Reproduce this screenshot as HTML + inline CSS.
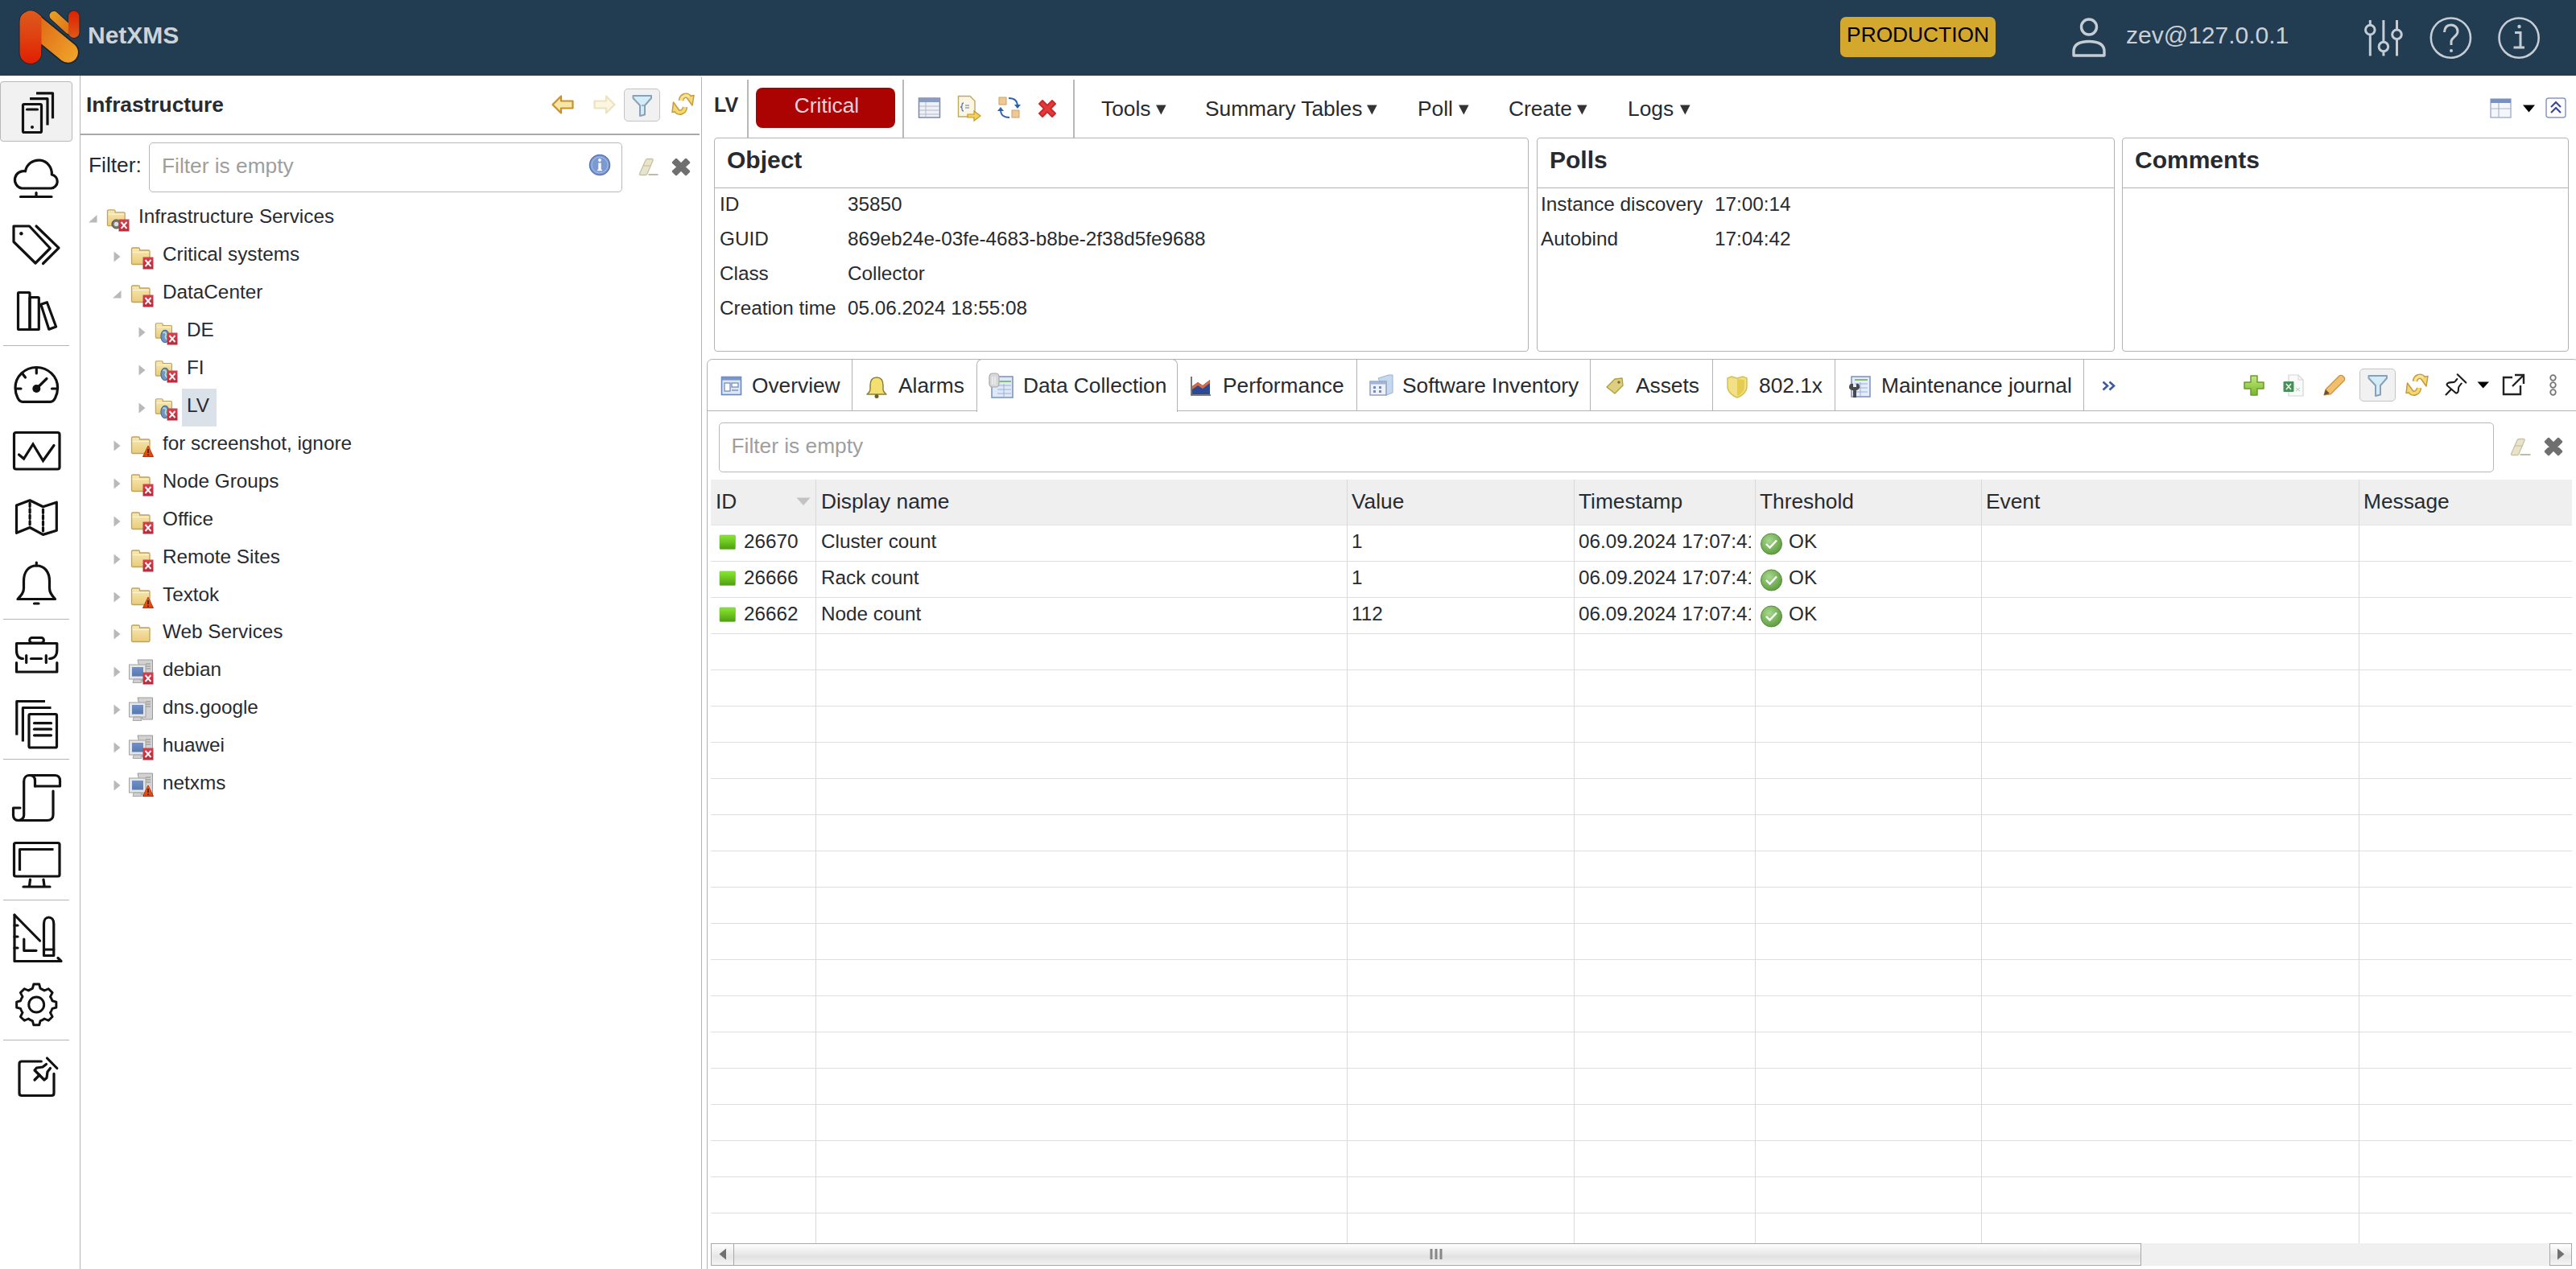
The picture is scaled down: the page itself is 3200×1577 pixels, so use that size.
<!DOCTYPE html>
<html><head><meta charset="utf-8"><title>NetXMS</title>
<style>
html,body{margin:0;padding:0;width:3200px;height:1577px;overflow:hidden;background:#fff;position:relative;font-family:"Liberation Sans",sans-serif}
.t{position:absolute;white-space:nowrap;line-height:1;font-family:"Liberation Sans",sans-serif}
svg{overflow:visible}
</style></head><body>
<svg width="0" height="0" style="position:absolute">
<defs>
<linearGradient id="fold" x1="0" y1="0" x2="0" y2="1"><stop offset="0" stop-color="#f7e9b4"/><stop offset="1" stop-color="#e9cc7a"/></linearGradient>
<linearGradient id="gbx" x1="0" y1="0" x2="0" y2="1"><stop offset="0" stop-color="#d4404f"/><stop offset="1" stop-color="#b82a3a"/></linearGradient>
<linearGradient id="gbw" x1="0" y1="0" x2="0" y2="1"><stop offset="0" stop-color="#e07020"/><stop offset="1" stop-color="#e04010"/></linearGradient>
<linearGradient id="scr" x1="0" y1="0" x2="0" y2="1"><stop offset="0" stop-color="#7090c8"/><stop offset="1" stop-color="#5878b0"/></linearGradient>
<linearGradient id="grn" x1="0" y1="0" x2="0" y2="1"><stop offset="0" stop-color="#8ae830"/><stop offset="1" stop-color="#4ea010"/></linearGradient>
<radialGradient id="okg" cx="0.4" cy="0.35" r="0.7"><stop offset="0" stop-color="#a8d890"/><stop offset="1" stop-color="#5a9a3a"/></radialGradient>
</defs></svg>
<div style="position:absolute;left:0px;top:0px;width:3200px;height:94px;background:#223c52"></div>
<svg style="position:absolute;left:0px;top:0px;" width="110" height="94" viewBox="0 0 110 94">
<defs>
<linearGradient id="lg1" x1="0" y1="0" x2="0" y2="1"><stop offset="0" stop-color="#dc5a1c"/><stop offset="0.5" stop-color="#e04010"/><stop offset="1" stop-color="#e01e00"/></linearGradient>
<linearGradient id="lg2" gradientUnits="userSpaceOnUse" x1="45" y1="40" x2="90" y2="72"><stop offset="0" stop-color="#e07018"/><stop offset="1" stop-color="#eea028"/></linearGradient>
<linearGradient id="lg3" x1="0" y1="0" x2="0" y2="1"><stop offset="0" stop-color="#dc2000"/><stop offset="1" stop-color="#e05818"/></linearGradient>
<linearGradient id="lg4" gradientUnits="userSpaceOnUse" x1="62" y1="16" x2="88" y2="40"><stop offset="0" stop-color="#e8a024"/><stop offset="1" stop-color="#e07018"/></linearGradient>
</defs>
<path d="M24.5 27 L24.5 65.5 A13.5 13.5 0 0 0 51.5 65.5 L51.5 55.6 L75.9 75.7 A13.5 13.5 0 0 0 93.1 54.9 L46.6 16.6 A13.5 13.5 0 0 0 24.5 27 Z" fill="url(#lg2)" stroke="#17222e" stroke-width="1.6"/>
<clipPath id="lcp"><rect x="0" y="0" width="51.5" height="94"/></clipPath>
<path clip-path="url(#lcp)" d="M24.5 27 L24.5 65.5 A13.5 13.5 0 0 0 51.5 65.5 L51.5 55.6 L75.9 75.7 A13.5 13.5 0 0 0 93.1 54.9 L46.6 16.6 A13.5 13.5 0 0 0 24.5 27 Z" fill="url(#lg1)"/>
<g stroke="#17222e" stroke-width="1.6">
<line x1="67" y1="19.5" x2="86" y2="37" stroke-width="12.6" stroke-linecap="round"/>
<rect x="85" y="13.5" width="13.5" height="33.5" rx="6.7"/>
</g>
<line x1="67" y1="19.5" x2="86" y2="37" stroke="url(#lg4)" stroke-width="11" stroke-linecap="round"/>
<rect x="85" y="13.5" width="13.5" height="33.5" rx="6.7" fill="url(#lg3)"/>
</svg>
<div class="t" style="left:109px;top:29px;font-size:30px;font-weight:700;color:#cdd3da;">NetXMS</div>
<div style="position:absolute;left:2286px;top:21px;width:193px;height:50px;background:#d4a82c;border-radius:7px"></div>
<div class="t" style="left:2294px;top:30px;font-size:26.3px;font-weight:400;color:#000;width:177px;text-align:center">PRODUCTION</div>
<svg style="position:absolute;left:2570px;top:20px;" width="50" height="54" viewBox="0 0 50 54"><g fill="none" stroke="#c5ccd4" stroke-width="3.4"><circle cx="25" cy="13.5" r="9.5"/><path d="M6 49 L6 44 C6 34 15 31.5 25 31.5 C35 31.5 44 34 44 44 L44 49 Z" stroke-linejoin="round"/></g></svg>
<div class="t" style="left:2641px;top:29px;font-size:30px;font-weight:400;color:#c9d0d8;">zev@127.0.0.1</div>
<svg style="position:absolute;left:2930px;top:20px;" width="60" height="54" viewBox="0 0 60 54"><g fill="none" stroke="#c5ccd4" stroke-width="3"><line x1="14.3" y1="5" x2="14.3" y2="11"/><line x1="14.3" y1="23" x2="14.3" y2="49.5"/><circle cx="14.3" cy="17.1" r="5.8"/><line x1="30.9" y1="5" x2="30.9" y2="32"/><line x1="30.9" y1="44" x2="30.9" y2="49.5"/><circle cx="30.9" cy="38" r="5.8"/><line x1="47.5" y1="5" x2="47.5" y2="17"/><line x1="47.5" y1="29" x2="47.5" y2="49.5"/><circle cx="47.5" cy="22.8" r="5.8"/></g></svg>
<svg style="position:absolute;left:3015px;top:18px;" width="60" height="60" viewBox="0 0 60 60"><g fill="none" stroke="#c5ccd4" stroke-width="2.6"><circle cx="29.4" cy="29.1" r="24.6"/><path d="M21.5 22 C22 15 26 13 29.5 13 C34 13 38 16 38 21 C38 27 31 28 30 33 L30 38" stroke-width="3"/></g><circle cx="30" cy="45" r="2" fill="#c5ccd4"/></svg>
<svg style="position:absolute;left:3100px;top:18px;" width="60" height="60" viewBox="0 0 60 60"><g fill="none" stroke="#c5ccd4" stroke-width="2.6"><circle cx="29.1" cy="29.1" r="24.6"/></g><circle cx="29.5" cy="15" r="2.2" fill="#c5ccd4"/><path d="M24 22.5 L31 22.5 L31 40 M22.5 41 L36 41" fill="none" stroke="#c5ccd4" stroke-width="3"/></svg>
<div style="position:absolute;left:0px;top:101px;width:90px;height:75px;background:#f1f1f1;border:1px solid #b8b8b8;border-radius:4px;box-sizing:border-box"></div>
<div style="position:absolute;left:4px;top:429px;width:82px;height:1px;background:#b5b5b5"></div>
<div style="position:absolute;left:4px;top:769px;width:82px;height:1px;background:#b5b5b5"></div>
<div style="position:absolute;left:4px;top:943px;width:82px;height:1px;background:#b5b5b5"></div>
<div style="position:absolute;left:4px;top:1118px;width:82px;height:1px;background:#b5b5b5"></div>
<div style="position:absolute;left:4px;top:1292px;width:82px;height:1px;background:#b5b5b5"></div>
<svg style="position:absolute;left:0px;top:94px;" width="99" height="1483" viewBox="0 94 99 1483">
<g fill="none" stroke="#111" stroke-width="3.2" stroke-linejoin="round" stroke-linecap="round">
<rect x="28.5" y="129.5" width="23" height="35" rx="1.5"/>
<line x1="33.5" y1="136" x2="46.5" y2="136"/>
<path d="M37 122.7 L59 122.7 L59 155.5" stroke-linecap="butt"/>
<path d="M45 115.8 L65.5 115.8 L65.5 147.3" stroke-linecap="butt"/>
</g>
<circle cx="40" cy="158" r="2" fill="#111"/>
<g fill="none" stroke="#111" stroke-width="3.2" stroke-linejoin="round" stroke-linecap="round">
<path d="M27 234 A10.8 10.8 0 0 1 31.5 212.8 A16.55 16.55 0 0 1 64.3 217 A8.6 8.6 0 0 1 63.5 234 Z"/>
<line x1="25.5" y1="244.5" x2="64" y2="244.5"/>
<line x1="45" y1="239.5" x2="45" y2="244.5"/>
</g>
<g fill="none" stroke="#111" stroke-width="3.2" stroke-linejoin="round" stroke-linecap="round">
<path d="M17 281 L36.5 281 L62.3 308.5 L44 327 L17 300.5 Z"/>
<path d="M45 281 L73 308.2 L53.5 327.5"/>
</g>
<circle cx="26.4" cy="290.3" r="2.2" fill="#111"/>
<g fill="none" stroke="#111" stroke-width="3.2" stroke-linejoin="round" stroke-linecap="round">
<rect x="22.5" y="363.5" width="14.5" height="46" rx="1"/>
<rect x="37" y="369.5" width="11.3" height="40" rx="1"/>
<path d="M50.8 378.3 L58.4 375.7 L69.6 406 L60.8 409.2 Z"/>
</g>
<g fill="none" stroke="#111" stroke-width="3.2" stroke-linejoin="round" stroke-linecap="round">
<path d="M28 499.3 C25 499.3 23.5 497.5 22 494.5 C20 490.5 19 486 19 482 A26.3 25.5 0 0 1 71.6 482 C71.6 486 70.6 490.5 68.6 494.5 C67.1 497.5 65.6 499.3 62.6 499.3 Z"/>
<line x1="45.3" y1="457" x2="45.3" y2="464"/>
<line x1="20" y1="483" x2="26" y2="483"/>
<line x1="64.5" y1="483" x2="70.5" y2="483"/>
<line x1="28" y1="464.5" x2="31.5" y2="469"/>
<line x1="45.3" y1="483" x2="58" y2="470.5"/>
</g>
<circle cx="45.3" cy="483" r="5" fill="#111"/>
<g fill="none" stroke="#111" stroke-width="3.2" stroke-linejoin="round" stroke-linecap="round">
<rect x="17.5" y="537.5" width="56.5" height="45.5" rx="2.5"/>
<path d="M23.5 565 L29.6 570 L41 552 L53.5 572.5 L67 553.5" stroke-linejoin="miter"/>
</g>
<g fill="none" stroke="#111" stroke-width="3.2" stroke-linejoin="round" stroke-linecap="round">
<path d="M20.5 628 L37.1 621.8 L53.5 629.7 L70.3 624.2 L70.3 659.3 L53.5 664.4 L37.1 655.5 L20.5 662.3 Z"/>
<line x1="37.1" y1="625" x2="37.1" y2="653" stroke-dasharray="4.5 3"/>
<line x1="53.5" y1="633" x2="53.5" y2="661" stroke-dasharray="4.5 3"/>
</g>
<g fill="none" stroke="#111" stroke-width="3.2" stroke-linejoin="round" stroke-linecap="round">
<path d="M45.3 703 C35 703 29.5 711 29.5 722 L29.5 731 C29.5 736 27 739 22 744.5 L68.5 744.5 C63.5 739 61.5 736 61.5 731 L61.5 722 C61.5 711 55.5 703 45.3 703 Z"/>
<line x1="45.3" y1="699" x2="45.3" y2="703"/>
<line x1="42.5" y1="750" x2="48" y2="750"/>
</g>
<g fill="none" stroke="#111" stroke-width="3.2" stroke-linejoin="round" stroke-linecap="round">
<path d="M20.5 808 L20.5 799.5 L70.8 799.5 L70.8 808 C70.8 815 67 818.5 61.5 818.5"/>
<path d="M28.5 818.5 C23 818.5 20.5 815 20.5 808"/>
<line x1="38.5" y1="818.5" x2="51.5" y2="818.5"/>
<line x1="32.7" y1="814.5" x2="32.7" y2="823.5"/>
<line x1="57.3" y1="814.5" x2="57.3" y2="823.5"/>
<path d="M20.5 823.5 L20.5 835 L70.8 835 L70.8 823.5"/>
<rect x="36.8" y="792.5" width="17.5" height="6.5" rx="3"/>
</g>
<g fill="none" stroke="#111" stroke-width="3.2" stroke-linejoin="round" stroke-linecap="round">
<path d="M20.8 913.5 L20.8 871.5 L56 871.5" stroke-linecap="butt"/>
<path d="M28.4 921.5 L28.4 879.5 L63.5 879.5" stroke-linecap="butt"/>
<rect x="36" y="887.5" width="34.5" height="41.5" rx="1.5"/>
<line x1="42.5" y1="898.7" x2="63.5" y2="898.7"/>
<line x1="42.5" y1="906.2" x2="63.5" y2="906.2"/>
<line x1="42.5" y1="913.8" x2="63.5" y2="913.8"/>
</g>
<g fill="none" stroke="#111" stroke-width="3.2" stroke-linejoin="round" stroke-linecap="round">
<path d="M43.5 977 L43.5 970 C43.5 965 40 963.5 36.5 963.5 C33 963.5 29.7 966 29.7 971 L29.7 1013 C29.7 1017 26 1019.5 23 1019.5 C19 1019.5 16.5 1017 16.5 1013 L16.5 1004 L25 1004"/>
<path d="M36.5 963.5 L68 963.5 C72 963.5 74.5 966 74.5 970 L74.5 977 L43.5 977"/>
<path d="M66 983 L66 1012.5 C66 1017 63 1019.5 59 1019.5 L23 1019.5"/>
</g>
<g fill="none" stroke="#111" stroke-width="3.2" stroke-linejoin="round" stroke-linecap="round">
<rect x="17.5" y="1047.5" width="56.5" height="41.5" rx="2"/>
<path d="M24.5 1082 L24.5 1055.5 L66.5 1055.5" stroke-linecap="butt"/>
<line x1="37.5" y1="1093" x2="36.5" y2="1101"/>
<line x1="54" y1="1093" x2="55" y2="1101"/>
<line x1="29" y1="1102" x2="62" y2="1102"/>
</g>
<g fill="none" stroke="#111" stroke-width="3.2" stroke-linejoin="round" stroke-linecap="round">
<path d="M18 1137 L18 1194.5 L76 1194.5 L72 1190.5"/>
<line x1="18" y1="1137" x2="49.5" y2="1169"/>
<path d="M29.8 1167 L29.8 1181.3 L45 1181.3"/>
<line x1="18" y1="1150" x2="22" y2="1150"/>
<line x1="18" y1="1164" x2="22" y2="1164"/>
<line x1="18" y1="1178" x2="22" y2="1178"/>
<path d="M54.5 1187.5 L54.5 1148 C54.5 1143 57 1140 60.5 1140 C64 1140 66.8 1143 66.8 1148 L66.8 1187.5 Z"/>
<line x1="54.5" y1="1180" x2="66.8" y2="1180"/>
</g>
<g fill="none" stroke="#111" stroke-width="3.2" stroke-linejoin="round" stroke-linecap="round" transform="translate(45.2 1248.5) scale(0.92) translate(-45.2 -1251.5)">
<path d="M41.5 1223.8 L49 1223.8 L50.5 1229.5 C52.5 1230.3 54.3 1231.3 56 1232.5 L61.5 1230 L66.8 1235.3 L64 1240.8 C65.2 1242.5 66 1244.3 66.7 1246.3 L72 1247.8 L72 1255.3 L66.7 1256.8 C66 1258.8 65.2 1260.6 64 1262.3 L66.8 1267.8 L61.5 1273 L56 1270.5 C54.3 1271.7 52.5 1272.7 50.5 1273.5 L49 1279 L41.5 1279 L40 1273.5 C38 1272.7 36.2 1271.7 34.5 1270.5 L29 1273 L23.7 1267.8 L26.5 1262.3 C25.3 1260.6 24.5 1258.8 23.8 1256.8 L18.5 1255.3 L18.5 1247.8 L23.8 1246.3 C24.5 1244.3 25.3 1242.5 26.5 1240.8 L23.7 1235.3 L29 1230 L34.5 1232.5 C36.2 1231.3 38 1230.3 40 1229.5 Z"/>
<circle cx="45.2" cy="1251.5" r="10.3"/>
</g>
<g fill="none" stroke="#111" stroke-width="3.2" stroke-linejoin="round" stroke-linecap="round">
<path d="M51.3 1319 L27 1319 C25 1319 24 1320 24 1322 L24 1358.5 C24 1360.5 25 1361.5 27 1361.5 L64 1361.5 C66 1361.5 67 1360.5 67 1358.5 L67 1334.4"/>
<line x1="58.5" y1="1315" x2="70.8" y2="1327.5"/>
<path d="M57.5 1322.5 L53 1326 L45.5 1327 L43 1330 L55 1342 L58 1339.5 L59 1332 L62.5 1327.5"/>
<line x1="49" y1="1336" x2="43" y2="1342"/>
</g>
</svg>
<div style="position:absolute;left:99px;top:94px;width:773px;height:1490px;border:1px solid #b3b3b3;border-top:none;border-top-right-radius:4px;box-sizing:border-box"></div>
<div class="t" style="left:107px;top:117px;font-size:26.3px;font-weight:700;color:#272b31;">Infrastructure</div>
<svg style="position:absolute;left:684px;top:116px;" width="32" height="28" viewBox="0 0 32 28"><path d="M2.5 14 L13 3.5 L13 9.5 L27.5 9.5 L27.5 18.5 L13 18.5 L13 24.5 Z" fill="#f6e6a8" stroke="#c8902a" stroke-width="2.2" stroke-linejoin="round"/></svg>
<svg style="position:absolute;left:734px;top:116px;" width="32" height="28" viewBox="0 0 32 28"><path d="M29.5 14 L19 3.5 L19 9.5 L4.5 9.5 L4.5 18.5 L19 18.5 L19 24.5 Z" fill="#fbf6e2" stroke="#ece2c0" stroke-width="2.2" stroke-linejoin="round"/></svg>
<div style="position:absolute;left:775px;top:110px;width:45px;height:41px;background:#f1f1f1;border:1px solid #c4c4c4;border-radius:5px;box-sizing:border-box"></div>
<svg style="position:absolute;left:784px;top:116px;" width="28" height="30" viewBox="0 0 28 30"><path d="M2.5 3 L25 3 L25 6 L17 15 L17 26.5 L11 28 L11 15 L2.5 6 Z" fill="#d4ecf8" stroke="#8aa0b8" stroke-width="2" stroke-linejoin="round"/><path d="M13 15 L17 15" stroke="#8aa0b8" stroke-width="1.5"/></svg>
<svg style="position:absolute;left:832px;top:114px;" width="32" height="32" viewBox="0 0 32 32"><g fill="none" stroke-linecap="butt"><path d="M14 11 C14.5 5 21 2.5 24.5 7" stroke="#c89a3a" stroke-width="6.4"/><path d="M19 19 C18.5 25 12 28 8 23.5" stroke="#c89a3a" stroke-width="6.4"/></g><path d="M20.5 6.5 L30 4.5 L28 17 Z" fill="#f0d878" stroke="#c89a3a" stroke-width="1.5" stroke-linejoin="round"/><path d="M12.5 24 L3 25.5 L4.5 13 Z" fill="#f0d878" stroke="#c89a3a" stroke-width="1.5" stroke-linejoin="round"/><g fill="none"><path d="M14 11 C14.5 5 21 2.5 24.5 7" stroke="#f6e496" stroke-width="3.6"/><path d="M19 19 C18.5 25 12 28 8 23.5" stroke="#f3d86e" stroke-width="3.6"/></g></svg>
<div style="position:absolute;left:100px;top:166px;width:769px;height:2px;background:#a9a9a9"></div>
<div class="t" style="left:110px;top:192px;font-size:26.3px;font-weight:400;color:#272b31;">Filter:</div>
<div style="position:absolute;left:185px;top:177px;width:588px;height:62px;border:1px solid #b8b8b8;border-radius:5px;box-sizing:border-box;background:#fff"></div>
<div class="t" style="left:201px;top:193px;font-size:26.3px;font-weight:400;color:#9e9e9e;">Filter is empty</div>
<svg style="position:absolute;left:731px;top:191px;" width="28" height="28" viewBox="0 0 28 28"><circle cx="14" cy="14" r="12.5" fill="#7d9ad0" stroke="#5a78b8" stroke-width="1.5"/><circle cx="14" cy="14" r="10" fill="none" stroke="#a8c0e8" stroke-width="1"/><rect x="12.3" y="11.5" width="3.4" height="9" fill="#fff"/><circle cx="14" cy="8" r="1.9" fill="#fff"/><path d="M11 20.5 L17 20.5" stroke="#fff" stroke-width="1.5"/></svg>
<svg style="position:absolute;left:792px;top:195px;" width="28" height="25" viewBox="0 0 28 25"><path d="M2.5 21 L10 4 C10.5 3 11.5 2.5 12.5 2.5 L17.5 2.5 C19 2.5 19.5 3.5 19 4.5 L12 21 C11.5 22 10.5 22.5 9.5 22.5 L4 22.5 C2.8 22.5 2 22 2.5 21 Z" fill="#e8e4cc" stroke="#c8c2a0" stroke-width="1.3"/><path d="M6.5 11 L17 11" stroke="#c8c2a0" stroke-width="1.2"/><path d="M13.5 22 L25.5 22" stroke="#a8a48c" stroke-width="1.5"/></svg>
<svg style="position:absolute;left:832px;top:194px;" width="28" height="27" viewBox="0 0 28 27"><path d="M4 8 L8 4 L14 10 L20 4 L24 8 L18 13.5 L24 19 L20 23 L14 17 L8 23 L4 19 L10 13.5 Z" fill="#6f6f6f" stroke="#6f6f6f" stroke-width="2.5" stroke-linejoin="round"/></svg>
<svg style="position:absolute;left:110.0px;top:267px;" width="11" height="10" viewBox="0 0 11 10"><path d="M10.5 0 L10.5 9.5 L0 9.5 Z" fill="#b9b9b9"/></svg>
<svg style="position:absolute;left:132px;top:259px" width="28" height="28"><svg x="0" y="0" width="27" height="27" viewBox="0 0 28 28">
<path d="M1.5 6.5 L1.5 3.5 C1.5 2.5 2 2 3 2 L10 2 C11 2 11.5 2.5 11.5 3.5 L11.5 5 L22.5 5 C23.5 5 24 5.5 24 6.5 L24 21 C24 22 23.5 22.5 22.5 22.5 L3 22.5 C2 22.5 1.5 22 1.5 21 Z" fill="url(#fold)" stroke="#c4a058" stroke-width="1.3"/>
<path d="M2.5 7.5 L23 7.5" stroke="#fbf3d0" stroke-width="1.2"/>
</svg><svg x="6" y="13" width="13" height="13" viewBox="0 0 14 14">
<circle cx="7" cy="7" r="6" fill="#777" stroke="#444" stroke-width="1"/><circle cx="7" cy="7" r="3" fill="#ddd"/>
</svg></svg>
<svg style="position:absolute;left:147px;top:272px" width="14" height="16" viewBox="0 0 14 16">
<rect x="0.5" y="0.5" width="13" height="15" fill="url(#gbx)"/>
<path d="M3.5 4 L10.5 12 M10.5 4 L3.5 12" stroke="#fff" stroke-width="2" opacity="0.95"/>
</svg>
<div class="t" style="left:172px;top:257px;font-size:24.3px;font-weight:400;color:#272b31;">Infrastructure Services</div>
<svg style="position:absolute;left:141.3px;top:312px;" width="9" height="14" viewBox="0 0 9 14"><path d="M0.5 0.5 L8.5 7 L0.5 13.5 Z" fill="#b9b9b9"/></svg>
<svg style="position:absolute;left:162px;top:306px" width="28" height="28" viewBox="0 0 28 28">
<path d="M1.5 6.5 L1.5 3.5 C1.5 2.5 2 2 3 2 L10 2 C11 2 11.5 2.5 11.5 3.5 L11.5 5 L22.5 5 C23.5 5 24 5.5 24 6.5 L24 21 C24 22 23.5 22.5 22.5 22.5 L3 22.5 C2 22.5 1.5 22 1.5 21 Z" fill="url(#fold)" stroke="#c4a058" stroke-width="1.3"/>
<path d="M2.5 7.5 L23 7.5" stroke="#fbf3d0" stroke-width="1.2"/>
</svg>
<svg style="position:absolute;left:177px;top:319px" width="14" height="16" viewBox="0 0 14 16">
<rect x="0.5" y="0.5" width="13" height="15" fill="url(#gbx)"/>
<path d="M3.5 4 L10.5 12 M10.5 4 L3.5 12" stroke="#fff" stroke-width="2" opacity="0.95"/>
</svg>
<div class="t" style="left:202px;top:304px;font-size:24.3px;font-weight:400;color:#272b31;">Critical systems</div>
<svg style="position:absolute;left:140.3px;top:361px;" width="11" height="10" viewBox="0 0 11 10"><path d="M10.5 0 L10.5 9.5 L0 9.5 Z" fill="#b9b9b9"/></svg>
<svg style="position:absolute;left:162px;top:353px" width="28" height="28" viewBox="0 0 28 28">
<path d="M1.5 6.5 L1.5 3.5 C1.5 2.5 2 2 3 2 L10 2 C11 2 11.5 2.5 11.5 3.5 L11.5 5 L22.5 5 C23.5 5 24 5.5 24 6.5 L24 21 C24 22 23.5 22.5 22.5 22.5 L3 22.5 C2 22.5 1.5 22 1.5 21 Z" fill="url(#fold)" stroke="#c4a058" stroke-width="1.3"/>
<path d="M2.5 7.5 L23 7.5" stroke="#fbf3d0" stroke-width="1.2"/>
</svg>
<svg style="position:absolute;left:177px;top:366px" width="14" height="16" viewBox="0 0 14 16">
<rect x="0.5" y="0.5" width="13" height="15" fill="url(#gbx)"/>
<path d="M3.5 4 L10.5 12 M10.5 4 L3.5 12" stroke="#fff" stroke-width="2" opacity="0.95"/>
</svg>
<div class="t" style="left:202px;top:351px;font-size:24.3px;font-weight:400;color:#272b31;">DataCenter</div>
<svg style="position:absolute;left:171.6px;top:406px;" width="9" height="14" viewBox="0 0 9 14"><path d="M0.5 0.5 L8.5 7 L0.5 13.5 Z" fill="#b9b9b9"/></svg>
<svg style="position:absolute;left:192px;top:400px" width="28" height="28"><svg x="0" y="0" width="25" height="25" viewBox="0 0 28 28">
<path d="M1.5 6.5 L1.5 3.5 C1.5 2.5 2 2 3 2 L10 2 C11 2 11.5 2.5 11.5 3.5 L11.5 5 L22.5 5 C23.5 5 24 5.5 24 6.5 L24 21 C24 22 23.5 22.5 22.5 22.5 L3 22.5 C2 22.5 1.5 22 1.5 21 Z" fill="url(#fold)" stroke="#c4a058" stroke-width="1.3"/>
<path d="M2.5 7.5 L23 7.5" stroke="#fbf3d0" stroke-width="1.2"/>
</svg><svg x="7" y="8" width="12" height="20" viewBox="0 0 14 20">
<ellipse cx="7" cy="10" rx="6" ry="9" fill="#6f95c0" stroke="#3d6690" stroke-width="1.2"/>
<path d="M4 5 C7 3 10 6 8 9 C6 12 9 13 10 15" stroke="#b8e0c8" stroke-width="2" fill="none"/>
</svg></svg>
<svg style="position:absolute;left:207px;top:413px" width="14" height="16" viewBox="0 0 14 16">
<rect x="0.5" y="0.5" width="13" height="15" fill="url(#gbx)"/>
<path d="M3.5 4 L10.5 12 M10.5 4 L3.5 12" stroke="#fff" stroke-width="2" opacity="0.95"/>
</svg>
<div class="t" style="left:232px;top:398px;font-size:24.3px;font-weight:400;color:#272b31;">DE</div>
<svg style="position:absolute;left:171.6px;top:453px;" width="9" height="14" viewBox="0 0 9 14"><path d="M0.5 0.5 L8.5 7 L0.5 13.5 Z" fill="#b9b9b9"/></svg>
<svg style="position:absolute;left:192px;top:447px" width="28" height="28"><svg x="0" y="0" width="25" height="25" viewBox="0 0 28 28">
<path d="M1.5 6.5 L1.5 3.5 C1.5 2.5 2 2 3 2 L10 2 C11 2 11.5 2.5 11.5 3.5 L11.5 5 L22.5 5 C23.5 5 24 5.5 24 6.5 L24 21 C24 22 23.5 22.5 22.5 22.5 L3 22.5 C2 22.5 1.5 22 1.5 21 Z" fill="url(#fold)" stroke="#c4a058" stroke-width="1.3"/>
<path d="M2.5 7.5 L23 7.5" stroke="#fbf3d0" stroke-width="1.2"/>
</svg><svg x="7" y="8" width="12" height="20" viewBox="0 0 14 20">
<ellipse cx="7" cy="10" rx="6" ry="9" fill="#6f95c0" stroke="#3d6690" stroke-width="1.2"/>
<path d="M4 5 C7 3 10 6 8 9 C6 12 9 13 10 15" stroke="#b8e0c8" stroke-width="2" fill="none"/>
</svg></svg>
<svg style="position:absolute;left:207px;top:460px" width="14" height="16" viewBox="0 0 14 16">
<rect x="0.5" y="0.5" width="13" height="15" fill="url(#gbx)"/>
<path d="M3.5 4 L10.5 12 M10.5 4 L3.5 12" stroke="#fff" stroke-width="2" opacity="0.95"/>
</svg>
<div class="t" style="left:232px;top:445px;font-size:24.3px;font-weight:400;color:#272b31;">FI</div>
<div style="position:absolute;left:226px;top:483px;width:43px;height:47px;background:#dae1e9"></div>
<svg style="position:absolute;left:171.6px;top:500px;" width="9" height="14" viewBox="0 0 9 14"><path d="M0.5 0.5 L8.5 7 L0.5 13.5 Z" fill="#b9b9b9"/></svg>
<svg style="position:absolute;left:192px;top:494px" width="28" height="28"><svg x="0" y="0" width="25" height="25" viewBox="0 0 28 28">
<path d="M1.5 6.5 L1.5 3.5 C1.5 2.5 2 2 3 2 L10 2 C11 2 11.5 2.5 11.5 3.5 L11.5 5 L22.5 5 C23.5 5 24 5.5 24 6.5 L24 21 C24 22 23.5 22.5 22.5 22.5 L3 22.5 C2 22.5 1.5 22 1.5 21 Z" fill="url(#fold)" stroke="#c4a058" stroke-width="1.3"/>
<path d="M2.5 7.5 L23 7.5" stroke="#fbf3d0" stroke-width="1.2"/>
</svg><svg x="7" y="8" width="12" height="20" viewBox="0 0 14 20">
<ellipse cx="7" cy="10" rx="6" ry="9" fill="#6f95c0" stroke="#3d6690" stroke-width="1.2"/>
<path d="M4 5 C7 3 10 6 8 9 C6 12 9 13 10 15" stroke="#b8e0c8" stroke-width="2" fill="none"/>
</svg></svg>
<svg style="position:absolute;left:207px;top:507px" width="14" height="16" viewBox="0 0 14 16">
<rect x="0.5" y="0.5" width="13" height="15" fill="url(#gbx)"/>
<path d="M3.5 4 L10.5 12 M10.5 4 L3.5 12" stroke="#fff" stroke-width="2" opacity="0.95"/>
</svg>
<div class="t" style="left:232px;top:492px;font-size:24.3px;font-weight:400;color:#272b31;">LV</div>
<svg style="position:absolute;left:141.3px;top:547px;" width="9" height="14" viewBox="0 0 9 14"><path d="M0.5 0.5 L8.5 7 L0.5 13.5 Z" fill="#b9b9b9"/></svg>
<svg style="position:absolute;left:162px;top:541px" width="28" height="28" viewBox="0 0 28 28">
<path d="M1.5 6.5 L1.5 3.5 C1.5 2.5 2 2 3 2 L10 2 C11 2 11.5 2.5 11.5 3.5 L11.5 5 L22.5 5 C23.5 5 24 5.5 24 6.5 L24 21 C24 22 23.5 22.5 22.5 22.5 L3 22.5 C2 22.5 1.5 22 1.5 21 Z" fill="url(#fold)" stroke="#c4a058" stroke-width="1.3"/>
<path d="M2.5 7.5 L23 7.5" stroke="#fbf3d0" stroke-width="1.2"/>
</svg>
<svg style="position:absolute;left:176.5px;top:553px" width="14" height="16" viewBox="0 0 14 16">
<path d="M7 1 L13.5 14.5 L0.5 14.5 Z" fill="url(#gbw)" stroke="#c03008" stroke-width="1" stroke-linejoin="round"/>
<path d="M7 5 L7 10" stroke="#5a1a00" stroke-width="1.8"/><circle cx="7" cy="12.3" r="1" fill="#5a1a00"/>
</svg>
<div class="t" style="left:202px;top:539px;font-size:24.3px;font-weight:400;color:#272b31;">for screenshot, ignore</div>
<svg style="position:absolute;left:141.3px;top:594px;" width="9" height="14" viewBox="0 0 9 14"><path d="M0.5 0.5 L8.5 7 L0.5 13.5 Z" fill="#b9b9b9"/></svg>
<svg style="position:absolute;left:162px;top:588px" width="28" height="28" viewBox="0 0 28 28">
<path d="M1.5 6.5 L1.5 3.5 C1.5 2.5 2 2 3 2 L10 2 C11 2 11.5 2.5 11.5 3.5 L11.5 5 L22.5 5 C23.5 5 24 5.5 24 6.5 L24 21 C24 22 23.5 22.5 22.5 22.5 L3 22.5 C2 22.5 1.5 22 1.5 21 Z" fill="url(#fold)" stroke="#c4a058" stroke-width="1.3"/>
<path d="M2.5 7.5 L23 7.5" stroke="#fbf3d0" stroke-width="1.2"/>
</svg>
<svg style="position:absolute;left:177px;top:601px" width="14" height="16" viewBox="0 0 14 16">
<rect x="0.5" y="0.5" width="13" height="15" fill="url(#gbx)"/>
<path d="M3.5 4 L10.5 12 M10.5 4 L3.5 12" stroke="#fff" stroke-width="2" opacity="0.95"/>
</svg>
<div class="t" style="left:202px;top:586px;font-size:24.3px;font-weight:400;color:#272b31;">Node Groups</div>
<svg style="position:absolute;left:141.3px;top:641px;" width="9" height="14" viewBox="0 0 9 14"><path d="M0.5 0.5 L8.5 7 L0.5 13.5 Z" fill="#b9b9b9"/></svg>
<svg style="position:absolute;left:162px;top:635px" width="28" height="28" viewBox="0 0 28 28">
<path d="M1.5 6.5 L1.5 3.5 C1.5 2.5 2 2 3 2 L10 2 C11 2 11.5 2.5 11.5 3.5 L11.5 5 L22.5 5 C23.5 5 24 5.5 24 6.5 L24 21 C24 22 23.5 22.5 22.5 22.5 L3 22.5 C2 22.5 1.5 22 1.5 21 Z" fill="url(#fold)" stroke="#c4a058" stroke-width="1.3"/>
<path d="M2.5 7.5 L23 7.5" stroke="#fbf3d0" stroke-width="1.2"/>
</svg>
<svg style="position:absolute;left:177px;top:648px" width="14" height="16" viewBox="0 0 14 16">
<rect x="0.5" y="0.5" width="13" height="15" fill="url(#gbx)"/>
<path d="M3.5 4 L10.5 12 M10.5 4 L3.5 12" stroke="#fff" stroke-width="2" opacity="0.95"/>
</svg>
<div class="t" style="left:202px;top:633px;font-size:24.3px;font-weight:400;color:#272b31;">Office</div>
<svg style="position:absolute;left:141.3px;top:688px;" width="9" height="14" viewBox="0 0 9 14"><path d="M0.5 0.5 L8.5 7 L0.5 13.5 Z" fill="#b9b9b9"/></svg>
<svg style="position:absolute;left:162px;top:682px" width="28" height="28" viewBox="0 0 28 28">
<path d="M1.5 6.5 L1.5 3.5 C1.5 2.5 2 2 3 2 L10 2 C11 2 11.5 2.5 11.5 3.5 L11.5 5 L22.5 5 C23.5 5 24 5.5 24 6.5 L24 21 C24 22 23.5 22.5 22.5 22.5 L3 22.5 C2 22.5 1.5 22 1.5 21 Z" fill="url(#fold)" stroke="#c4a058" stroke-width="1.3"/>
<path d="M2.5 7.5 L23 7.5" stroke="#fbf3d0" stroke-width="1.2"/>
</svg>
<svg style="position:absolute;left:177px;top:695px" width="14" height="16" viewBox="0 0 14 16">
<rect x="0.5" y="0.5" width="13" height="15" fill="url(#gbx)"/>
<path d="M3.5 4 L10.5 12 M10.5 4 L3.5 12" stroke="#fff" stroke-width="2" opacity="0.95"/>
</svg>
<div class="t" style="left:202px;top:680px;font-size:24.3px;font-weight:400;color:#272b31;">Remote Sites</div>
<svg style="position:absolute;left:141.3px;top:735px;" width="9" height="14" viewBox="0 0 9 14"><path d="M0.5 0.5 L8.5 7 L0.5 13.5 Z" fill="#b9b9b9"/></svg>
<svg style="position:absolute;left:162px;top:729px" width="28" height="28" viewBox="0 0 28 28">
<path d="M1.5 6.5 L1.5 3.5 C1.5 2.5 2 2 3 2 L10 2 C11 2 11.5 2.5 11.5 3.5 L11.5 5 L22.5 5 C23.5 5 24 5.5 24 6.5 L24 21 C24 22 23.5 22.5 22.5 22.5 L3 22.5 C2 22.5 1.5 22 1.5 21 Z" fill="url(#fold)" stroke="#c4a058" stroke-width="1.3"/>
<path d="M2.5 7.5 L23 7.5" stroke="#fbf3d0" stroke-width="1.2"/>
</svg>
<svg style="position:absolute;left:176.5px;top:741px" width="14" height="16" viewBox="0 0 14 16">
<path d="M7 1 L13.5 14.5 L0.5 14.5 Z" fill="url(#gbw)" stroke="#c03008" stroke-width="1" stroke-linejoin="round"/>
<path d="M7 5 L7 10" stroke="#5a1a00" stroke-width="1.8"/><circle cx="7" cy="12.3" r="1" fill="#5a1a00"/>
</svg>
<div class="t" style="left:202px;top:727px;font-size:24.3px;font-weight:400;color:#272b31;">Textok</div>
<svg style="position:absolute;left:141.3px;top:781px;" width="9" height="14" viewBox="0 0 9 14"><path d="M0.5 0.5 L8.5 7 L0.5 13.5 Z" fill="#b9b9b9"/></svg>
<svg style="position:absolute;left:162px;top:775px" width="28" height="28" viewBox="0 0 28 28">
<path d="M1.5 6.5 L1.5 3.5 C1.5 2.5 2 2 3 2 L10 2 C11 2 11.5 2.5 11.5 3.5 L11.5 5 L22.5 5 C23.5 5 24 5.5 24 6.5 L24 21 C24 22 23.5 22.5 22.5 22.5 L3 22.5 C2 22.5 1.5 22 1.5 21 Z" fill="url(#fold)" stroke="#c4a058" stroke-width="1.3"/>
<path d="M2.5 7.5 L23 7.5" stroke="#fbf3d0" stroke-width="1.2"/>
</svg>
<div class="t" style="left:202px;top:773px;font-size:24.3px;font-weight:400;color:#272b31;">Web Services</div>
<svg style="position:absolute;left:141.3px;top:828px;" width="9" height="14" viewBox="0 0 9 14"><path d="M0.5 0.5 L8.5 7 L0.5 13.5 Z" fill="#b9b9b9"/></svg>
<svg style="position:absolute;left:160px;top:819px" width="30" height="30" viewBox="0 0 30 30">
<path d="M11 1 L29.5 1 L29.5 28 L17 28 Z" fill="#d2d2d2" stroke="#9a9a9a" stroke-width="1"/>
<path d="M21 6 L27 6 M21 9 L27 9 M21 12 L27 12" stroke="#8a8a8a" stroke-width="1"/>
<rect x="0.5" y="7" width="20.5" height="18" fill="#e6e6e6" stroke="#a0a0a0" stroke-width="1"/>
<rect x="4" y="10" width="14" height="11.5" fill="url(#scr)"/>
<path d="M6 25 L15 25 L16 29.5 L5 29.5 Z" fill="#cfcfcf" stroke="#999" stroke-width="0.8"/>
</svg>
<svg style="position:absolute;left:177px;top:835px" width="14" height="16" viewBox="0 0 14 16">
<rect x="0.5" y="0.5" width="13" height="15" fill="url(#gbx)"/>
<path d="M3.5 4 L10.5 12 M10.5 4 L3.5 12" stroke="#fff" stroke-width="2" opacity="0.95"/>
</svg>
<div class="t" style="left:202px;top:820px;font-size:24.3px;font-weight:400;color:#272b31;">debian</div>
<svg style="position:absolute;left:141.3px;top:875px;" width="9" height="14" viewBox="0 0 9 14"><path d="M0.5 0.5 L8.5 7 L0.5 13.5 Z" fill="#b9b9b9"/></svg>
<svg style="position:absolute;left:160px;top:866px" width="30" height="30" viewBox="0 0 30 30">
<path d="M11 1 L29.5 1 L29.5 28 L17 28 Z" fill="#d2d2d2" stroke="#9a9a9a" stroke-width="1"/>
<path d="M21 6 L27 6 M21 9 L27 9 M21 12 L27 12" stroke="#8a8a8a" stroke-width="1"/>
<rect x="0.5" y="7" width="20.5" height="18" fill="#e6e6e6" stroke="#a0a0a0" stroke-width="1"/>
<rect x="4" y="10" width="14" height="11.5" fill="url(#scr)"/>
<path d="M6 25 L15 25 L16 29.5 L5 29.5 Z" fill="#cfcfcf" stroke="#999" stroke-width="0.8"/>
</svg>
<div class="t" style="left:202px;top:867px;font-size:24.3px;font-weight:400;color:#272b31;">dns.google</div>
<svg style="position:absolute;left:141.3px;top:922px;" width="9" height="14" viewBox="0 0 9 14"><path d="M0.5 0.5 L8.5 7 L0.5 13.5 Z" fill="#b9b9b9"/></svg>
<svg style="position:absolute;left:160px;top:913px" width="30" height="30" viewBox="0 0 30 30">
<path d="M11 1 L29.5 1 L29.5 28 L17 28 Z" fill="#d2d2d2" stroke="#9a9a9a" stroke-width="1"/>
<path d="M21 6 L27 6 M21 9 L27 9 M21 12 L27 12" stroke="#8a8a8a" stroke-width="1"/>
<rect x="0.5" y="7" width="20.5" height="18" fill="#e6e6e6" stroke="#a0a0a0" stroke-width="1"/>
<rect x="4" y="10" width="14" height="11.5" fill="url(#scr)"/>
<path d="M6 25 L15 25 L16 29.5 L5 29.5 Z" fill="#cfcfcf" stroke="#999" stroke-width="0.8"/>
</svg>
<svg style="position:absolute;left:177px;top:929px" width="14" height="16" viewBox="0 0 14 16">
<rect x="0.5" y="0.5" width="13" height="15" fill="url(#gbx)"/>
<path d="M3.5 4 L10.5 12 M10.5 4 L3.5 12" stroke="#fff" stroke-width="2" opacity="0.95"/>
</svg>
<div class="t" style="left:202px;top:914px;font-size:24.3px;font-weight:400;color:#272b31;">huawei</div>
<svg style="position:absolute;left:141.3px;top:969px;" width="9" height="14" viewBox="0 0 9 14"><path d="M0.5 0.5 L8.5 7 L0.5 13.5 Z" fill="#b9b9b9"/></svg>
<svg style="position:absolute;left:160px;top:960px" width="30" height="30" viewBox="0 0 30 30">
<path d="M11 1 L29.5 1 L29.5 28 L17 28 Z" fill="#d2d2d2" stroke="#9a9a9a" stroke-width="1"/>
<path d="M21 6 L27 6 M21 9 L27 9 M21 12 L27 12" stroke="#8a8a8a" stroke-width="1"/>
<rect x="0.5" y="7" width="20.5" height="18" fill="#e6e6e6" stroke="#a0a0a0" stroke-width="1"/>
<rect x="4" y="10" width="14" height="11.5" fill="url(#scr)"/>
<path d="M6 25 L15 25 L16 29.5 L5 29.5 Z" fill="#cfcfcf" stroke="#999" stroke-width="0.8"/>
</svg>
<svg style="position:absolute;left:176.5px;top:975px" width="14" height="16" viewBox="0 0 14 16">
<path d="M7 1 L13.5 14.5 L0.5 14.5 Z" fill="url(#gbw)" stroke="#c03008" stroke-width="1" stroke-linejoin="round"/>
<path d="M7 5 L7 10" stroke="#5a1a00" stroke-width="1.8"/><circle cx="7" cy="12.3" r="1" fill="#5a1a00"/>
</svg>
<div class="t" style="left:202px;top:961px;font-size:24.3px;font-weight:400;color:#272b31;">netxms</div>
<div class="t" style="left:887px;top:118px;font-size:25px;font-weight:700;color:#272b31;">LV</div>
<div style="position:absolute;left:928px;top:99px;width:2px;height:72px;background:#b9b9b9"></div>
<div style="position:absolute;left:939px;top:109px;width:173px;height:50px;background:#ab0202;border-radius:8px"></div>
<div class="t" style="left:940.5px;top:118px;font-size:26.3px;font-weight:400;color:#e8d4d8;width:173px;text-align:center">Critical</div>
<div style="position:absolute;left:1121px;top:99px;width:2px;height:72px;background:#b9b9b9"></div>
<svg style="position:absolute;left:1140px;top:120px;" width="30" height="28" viewBox="0 0 30 28"><rect x="1.5" y="2" width="26" height="24" fill="#eef0f6" stroke="#7a88a8" stroke-width="1.5"/><rect x="1.5" y="2" width="26" height="5" fill="#8a9ac0"/><path d="M2 12 L27 12 M2 17 L27 17 M2 22 L27 22 M10 7 L10 26" stroke="#b0b8cc" stroke-width="1"/></svg>
<svg style="position:absolute;left:1188px;top:118px;" width="32" height="33" viewBox="0 0 32 33"><path d="M2.5 1.5 L17 1.5 L23 7.5 L23 27 L2.5 27 Z" fill="#fbf6e4" stroke="#c0a860" stroke-width="1.4"/><path d="M9 10 C7 10 7 12 7 13 C7 14 6 15 5 15 C6 15 7 16 7 17 C7 18 7 20 9 20" fill="none" stroke="#5a7ab8" stroke-width="1.3"/><path d="M11 13 L16 13 M11 16 L16 16" stroke="#5a7ab8" stroke-width="1.2"/><path d="M14 24 L22 24 L22 20 L30 26 L22 32 L22 28 L14 28 Z" fill="#f4d060" stroke="#c89820" stroke-width="1.2"/></svg>
<svg style="position:absolute;left:1239px;top:119px;" width="30" height="30" viewBox="0 0 30 30"><rect x="2" y="2" width="9" height="9" fill="#f0c890" stroke="#c8a070" stroke-width="1"/><rect x="18" y="18" width="9" height="9" fill="#f0c890" stroke="#c8a070" stroke-width="1"/><path d="M14 3 C21 3 25 6 25 13" fill="none" stroke="#2a60b0" stroke-width="1.8"/><path d="M21 11 L25 16 L29 11 Z" fill="#2a60b0"/><path d="M15 27 C8 27 4 24 4 17" fill="none" stroke="#2a60b0" stroke-width="1.8"/><path d="M0 19 L4 14 L8 19 Z" fill="#2a60b0"/></svg>
<svg style="position:absolute;left:1287px;top:121px;" width="30" height="30" viewBox="0 0 30 30"><path d="M4 8 L8 4 L14 10 L20 4 L24 8 L18 14 L24 20 L20 24 L14 18 L8 24 L4 20 L10 14 Z" fill="#e03a3a" stroke="#d02828" stroke-width="2" stroke-linejoin="round"/></svg>
<div style="position:absolute;left:1333px;top:99px;width:2px;height:72px;background:#b9b9b9"></div>
<div class="t" style="left:1368px;top:122px;font-size:26.3px;font-weight:400;color:#272b31;">Tools</div>
<svg style="position:absolute;left:1436px;top:130px;" width="13" height="13" viewBox="0 0 13 13"><path d="M0 0.5 L12.6 0.5 L6.3 12.6 Z" fill="#333"/></svg>
<div class="t" style="left:1497px;top:122px;font-size:26.3px;font-weight:400;color:#272b31;">Summary Tables</div>
<svg style="position:absolute;left:1698px;top:130px;" width="13" height="13" viewBox="0 0 13 13"><path d="M0 0.5 L12.6 0.5 L6.3 12.6 Z" fill="#333"/></svg>
<div class="t" style="left:1761px;top:122px;font-size:26.3px;font-weight:400;color:#272b31;">Poll</div>
<svg style="position:absolute;left:1812px;top:130px;" width="13" height="13" viewBox="0 0 13 13"><path d="M0 0.5 L12.6 0.5 L6.3 12.6 Z" fill="#333"/></svg>
<div class="t" style="left:1874px;top:122px;font-size:26.3px;font-weight:400;color:#272b31;">Create</div>
<svg style="position:absolute;left:1959px;top:130px;" width="13" height="13" viewBox="0 0 13 13"><path d="M0 0.5 L12.6 0.5 L6.3 12.6 Z" fill="#333"/></svg>
<div class="t" style="left:2022px;top:122px;font-size:26.3px;font-weight:400;color:#272b31;">Logs</div>
<svg style="position:absolute;left:2087px;top:130px;" width="13" height="13" viewBox="0 0 13 13"><path d="M0 0.5 L12.6 0.5 L6.3 12.6 Z" fill="#333"/></svg>
<svg style="position:absolute;left:3092px;top:121px;" width="30" height="28" viewBox="0 0 30 28"><rect x="2" y="2" width="25" height="23" fill="#f4f6fa" stroke="#a8b4cc" stroke-width="1.5"/><rect x="2" y="2" width="25" height="5" fill="#7890c8"/><path d="M2 14 L27 14 M12 7 L12 25" stroke="#a8b4cc" stroke-width="1.2"/></svg>
<svg style="position:absolute;left:3134px;top:130px;" width="16" height="10" viewBox="0 0 16 10"><path d="M0 0.5 L15 0.5 L7.5 9.5 Z" fill="#000"/></svg>
<svg style="position:absolute;left:3161px;top:120px;" width="28" height="28" viewBox="0 0 28 28"><rect x="2" y="2" width="24" height="24" rx="3" fill="#fff" stroke="#8898c0" stroke-width="1.5"/><path d="M8 13 L14 7 L20 13 M8 20 L14 14 L20 20" fill="none" stroke="#3848a0" stroke-width="2.2"/></svg>
<div style="position:absolute;left:887px;top:171px;width:1012px;height:266px;border:1px solid #b3b3b3;border-radius:4px;box-sizing:border-box;background:#fff"></div>
<div style="position:absolute;left:888px;top:233px;width:1010px;height:1px;background:#b3b3b3"></div>
<div class="t" style="left:903px;top:184px;font-size:30px;font-weight:700;color:#272b31;">Object</div>
<div style="position:absolute;left:1909px;top:171px;width:718px;height:266px;border:1px solid #b3b3b3;border-radius:4px;box-sizing:border-box;background:#fff"></div>
<div style="position:absolute;left:1910px;top:233px;width:716px;height:1px;background:#b3b3b3"></div>
<div class="t" style="left:1925px;top:184px;font-size:30px;font-weight:700;color:#272b31;">Polls</div>
<div style="position:absolute;left:2636px;top:171px;width:555px;height:266px;border:1px solid #b3b3b3;border-radius:4px;box-sizing:border-box;background:#fff"></div>
<div style="position:absolute;left:2637px;top:233px;width:553px;height:1px;background:#b3b3b3"></div>
<div class="t" style="left:2652px;top:184px;font-size:30px;font-weight:700;color:#272b31;">Comments</div>
<div class="t" style="left:894px;top:242px;font-size:24.3px;font-weight:400;color:#272b31;">ID</div>
<div class="t" style="left:1053px;top:242px;font-size:24.3px;font-weight:400;color:#272b31;">35850</div>
<div class="t" style="left:894px;top:285px;font-size:24.3px;font-weight:400;color:#272b31;">GUID</div>
<div class="t" style="left:1053px;top:285px;font-size:24.3px;font-weight:400;color:#272b31;">869eb24e-03fe-4683-b8be-2f38d5fe9688</div>
<div class="t" style="left:894px;top:328px;font-size:24.3px;font-weight:400;color:#272b31;">Class</div>
<div class="t" style="left:1053px;top:328px;font-size:24.3px;font-weight:400;color:#272b31;">Collector</div>
<div class="t" style="left:894px;top:371px;font-size:24.3px;font-weight:400;color:#272b31;">Creation time</div>
<div class="t" style="left:1053px;top:371px;font-size:24.3px;font-weight:400;color:#272b31;">05.06.2024 18:55:08</div>
<div class="t" style="left:1914px;top:242px;font-size:24.3px;font-weight:400;color:#272b31;">Instance discovery</div>
<div class="t" style="left:2130px;top:242px;font-size:24.3px;font-weight:400;color:#272b31;">17:00:14</div>
<div class="t" style="left:1914px;top:285px;font-size:24.3px;font-weight:400;color:#272b31;">Autobind</div>
<div class="t" style="left:2130px;top:285px;font-size:24.3px;font-weight:400;color:#272b31;">17:04:42</div>
<div style="position:absolute;left:878px;top:446px;width:2326px;height:1200px;border:1px solid #b3b3b3;border-top-left-radius:7px;border-top-right-radius:7px;box-sizing:border-box"></div>
<div style="position:absolute;left:879px;top:510px;width:2321px;height:1px;background:#b3b3b3"></div>
<div style="position:absolute;left:1213px;top:446px;width:250px;height:66px;border:1px solid #b3b3b3;border-bottom:none;border-top-left-radius:7px;border-top-right-radius:7px;box-sizing:border-box;background:#fff"></div>
<div style="position:absolute;left:1058px;top:447px;width:1px;height:64px;background:#b3b3b3"></div>
<div style="position:absolute;left:1685px;top:447px;width:1px;height:64px;background:#b3b3b3"></div>
<div style="position:absolute;left:1975px;top:447px;width:1px;height:64px;background:#b3b3b3"></div>
<div style="position:absolute;left:2127px;top:447px;width:1px;height:64px;background:#b3b3b3"></div>
<div style="position:absolute;left:2279px;top:447px;width:1px;height:64px;background:#b3b3b3"></div>
<div style="position:absolute;left:2588px;top:447px;width:1px;height:64px;background:#b3b3b3"></div>
<div class="t" style="left:934px;top:466px;font-size:26.3px;font-weight:400;color:#272b31;">Overview</div>
<div class="t" style="left:1116px;top:466px;font-size:26.3px;font-weight:400;color:#272b31;">Alarms</div>
<div class="t" style="left:1271px;top:466px;font-size:26.3px;font-weight:400;color:#272b31;">Data Collection</div>
<div class="t" style="left:1519px;top:466px;font-size:26.3px;font-weight:400;color:#272b31;">Performance</div>
<div class="t" style="left:1742px;top:466px;font-size:26.3px;font-weight:400;color:#272b31;">Software Inventory</div>
<div class="t" style="left:2032px;top:466px;font-size:26.3px;font-weight:400;color:#272b31;">Assets</div>
<div class="t" style="left:2185px;top:466px;font-size:26.3px;font-weight:400;color:#272b31;">802.1x</div>
<div class="t" style="left:2337px;top:466px;font-size:26.3px;font-weight:400;color:#272b31;">Maintenance journal</div>
<svg style="position:absolute;left:895px;top:467px;" width="28" height="26" viewBox="0 0 28 26"><rect x="1.5" y="1.5" width="24" height="22" fill="#dde6f4" stroke="#6a86b8" stroke-width="1.6"/><rect x="1.5" y="1.5" width="24" height="4" fill="#7a96c8"/><rect x="5" y="9" width="7" height="10" fill="#fff" stroke="#6a86b8" stroke-width="1.2"/><rect x="14" y="9" width="8" height="5" fill="#fff" stroke="#6a86b8" stroke-width="1.2"/><path d="M14 18 L22 18" stroke="#6a86b8" stroke-width="1.2"/></svg>
<svg style="position:absolute;left:1074px;top:466px;" width="30" height="30" viewBox="0 0 30 30"><path d="M15 3 C9 3 7 8 7 13 L7 18 C7 21 5 22 3 24 L27 24 C25 22 23 21 23 18 L23 13 C23 8 21 3 15 3 Z" fill="#f4e070" stroke="#8a8040" stroke-width="1.5" stroke-linejoin="round"/><circle cx="15" cy="26.5" r="2.5" fill="#6a6030"/></svg>
<svg style="position:absolute;left:1228px;top:463px;" width="32" height="32" viewBox="0 0 32 32"><rect x="4" y="5" width="26" height="26" fill="#dfe8f6" stroke="#7890c0" stroke-width="1.5"/><path d="M11 11 L28 11" stroke="#6aa84a" stroke-width="1.5"/><path d="M11 16 L28 16 M11 21 L28 21 M11 26 L28 26 M19 14 L19 30" stroke="#9ab0d8" stroke-width="1"/><rect x="1" y="1" width="12" height="17" rx="4" fill="#d8d8d8" stroke="#a8a8a8" stroke-width="1.2"/><path d="M5 5 L5 15 M8 5 L8 15" stroke="#f4f4f4" stroke-width="1.2"/></svg>
<svg style="position:absolute;left:1478px;top:466px;" width="28" height="28" viewBox="0 0 28 28"><path d="M2 2 L2 25 L26 25" fill="none" stroke="#555" stroke-width="1.6"/><path d="M3 24 L3 14 L10 9 L16 13 L25 6 L25 24 Z" fill="#2a4a98"/><path d="M3 14 L10 9 L16 13 L25 6 L25 10 L16 17 L10 13 L3 18 Z" fill="#d86a40"/></svg>
<svg style="position:absolute;left:1700px;top:464px;" width="32" height="30" viewBox="0 0 32 30"><path d="M12 6 L25 2 L30 2 L30 24 L22 27 Z" fill="#c4d8f0" stroke="#9ab0cc" stroke-width="1"/><rect x="2" y="10" width="20" height="17" fill="#eef2f8" stroke="#8a9ab8" stroke-width="1.4"/><rect x="2" y="10" width="20" height="3.5" fill="#a0b4d4"/><rect x="6" y="16" width="3" height="3" fill="#7888c0"/><rect x="13" y="16" width="3" height="3" fill="#7888c0"/><rect x="6" y="21" width="3" height="3" fill="#7888c0"/><rect x="13" y="21" width="3" height="3" fill="#7888c0"/></svg>
<svg style="position:absolute;left:1993px;top:467px;" width="26" height="26" viewBox="0 0 26 26"><path d="M3 14 L13 4 L22 3 L23 12 L13 22 Z" fill="#dcd080" stroke="#b0a040" stroke-width="1.4" stroke-linejoin="round"/><circle cx="18" cy="8" r="1.8" fill="#8a6a3a"/></svg>
<svg style="position:absolute;left:2143px;top:466px;" width="30" height="30" viewBox="0 0 30 30"><path d="M3 4 L8 2 L15 4 L22 2 L27 4 L27 14 C27 21 21 26 15 28 C9 26 3 21 3 14 Z" fill="#f0e088" stroke="#d8c050" stroke-width="1.5" stroke-linejoin="round"/><path d="M15 5 L15 26 C20 24 24 20 24 14 L24 6 Z" fill="#e4cc50"/></svg>
<svg style="position:absolute;left:2294px;top:466px;" width="32" height="30" viewBox="0 0 32 30"><rect x="6" y="2" width="23" height="25" fill="#e4ecf8" stroke="#7890c0" stroke-width="1.5"/><path d="M10 6 L26 6" stroke="#6aa84a" stroke-width="1.5"/><path d="M10 11 L26 11 M10 16 L26 16 M10 21 L26 21 M17 9 L17 26" stroke="#9ab0d8" stroke-width="1"/><path d="M3 15 C3 11 6 10 8 11 L8 15 L12 15 L12 11 C14 10 17 12 16 16 C15 18 13 19 12 19 L12 28 L8 28 L8 19 C6 19 3 18 3 15 Z" fill="#4a4a4a"/></svg>
<svg style="position:absolute;left:2611px;top:473px;" width="20" height="13" viewBox="0 0 20 13"><path d="M1.5 1.5 L7 6.5 L1.5 11.5 M9.5 1.5 L15 6.5 L9.5 11.5" fill="none" stroke="#3a5aa8" stroke-width="2.6"/></svg>
<svg style="position:absolute;left:2786px;top:465px;" width="28" height="28" viewBox="0 0 28 28"><defs><linearGradient id="plg" x1="0" y1="0" x2="0" y2="1"><stop offset="0" stop-color="#c4e880"/><stop offset="1" stop-color="#78b828"/></linearGradient></defs><path d="M10 2 L18 2 L18 10 L26 10 L26 18 L18 18 L18 26 L10 26 L10 18 L2 18 L2 10 L10 10 Z" fill="url(#plg)" stroke="#6a9a30" stroke-width="1.5" stroke-linejoin="round"/></svg>
<svg style="position:absolute;left:2835px;top:464px;" width="28" height="30" viewBox="0 0 28 30"><path d="M8 2 L20 2 L26 8 L26 28 L8 28 Z" fill="#fafafa" stroke="#d4d4d4" stroke-width="1.2"/><path d="M20 2 L20 8 L26 8" fill="none" stroke="#d4d4d4" stroke-width="1"/><rect x="1.5" y="10" width="13" height="13" rx="1" fill="#4a9058"/><path d="M5 13 L11 20 M11 13 L5 20" stroke="#e8f4e8" stroke-width="1.6"/><path d="M17 18 L22 22 M17 22 L22 18" stroke="#a8d0b0" stroke-width="1"/></svg>
<svg style="position:absolute;left:2884px;top:464px;" width="32" height="30" viewBox="0 0 32 30"><path d="M3 27 L5 20 L22 3 C23 2 25 2 26 3 L28 5 C29 6 29 8 28 9 L11 26 Z" fill="#f0c070" stroke="#c89040" stroke-width="1.2" stroke-linejoin="round"/><path d="M3 27 L5 20 L10 25 Z" fill="#6a5030"/></svg>
<div style="position:absolute;left:2931px;top:458px;width:45px;height:41px;background:#f1f1f1;border:1px solid #c4c4c4;border-radius:5px;box-sizing:border-box"></div>
<svg style="position:absolute;left:2940px;top:464px;" width="28" height="30" viewBox="0 0 28 30"><path d="M2.5 3 L25 3 L25 6 L17 15 L17 26.5 L11 28 L11 15 L2.5 6 Z" fill="#d4ecf8" stroke="#8aa0b8" stroke-width="2" stroke-linejoin="round"/></svg>
<svg style="position:absolute;left:2986px;top:463px;" width="32" height="32" viewBox="0 0 32 32"><g fill="none" stroke-linecap="butt"><path d="M14 11 C14.5 5 21 2.5 24.5 7" stroke="#c89a3a" stroke-width="6.4"/><path d="M19 19 C18.5 25 12 28 8 23.5" stroke="#c89a3a" stroke-width="6.4"/></g><path d="M20.5 6.5 L30 4.5 L28 17 Z" fill="#f0d878" stroke="#c89a3a" stroke-width="1.5" stroke-linejoin="round"/><path d="M12.5 24 L3 25.5 L4.5 13 Z" fill="#f0d878" stroke="#c89a3a" stroke-width="1.5" stroke-linejoin="round"/><g fill="none"><path d="M14 11 C14.5 5 21 2.5 24.5 7" stroke="#f6e496" stroke-width="3.6"/><path d="M19 19 C18.5 25 12 28 8 23.5" stroke="#f3d86e" stroke-width="3.6"/></g></svg>
<svg style="position:absolute;left:3035px;top:463px;" width="32" height="32" viewBox="0 0 32 32"><g fill="none" stroke="#1a1a1a" stroke-width="2.1" stroke-linejoin="round" stroke-linecap="round"><line x1="17.7" y1="2.3" x2="28.3" y2="12.6"/><path d="M17.3 8 C15.5 10 15 11.9 13.4 11.9 C10 12 7 12.3 5.3 13.5 C4.5 14.3 4.6 15.5 5.2 16.2 L15.6 25.3 C16.5 26 17.8 25 18.4 24 C19.2 22.5 18.6 20 19.3 18.2 C20 16.5 21.5 15 22.7 13.6"/><line x1="3.5" y1="27.5" x2="9.5" y2="21.2"/></g></svg>
<svg style="position:absolute;left:3077px;top:474px;" width="16" height="9" viewBox="0 0 16 9"><path d="M0.5 0.5 L15 0.5 L7.7 8.5 Z" fill="#000"/></svg>
<svg style="position:absolute;left:3107px;top:463px;" width="32" height="30" viewBox="0 0 32 30"><g fill="none" stroke="#222" stroke-width="2.4"><path d="M14 6 L3 6 L3 27 L24 27 L24 16"/><path d="M17 3 L28 3 L28 14 M28 3 L14 17"/></g></svg>
<svg style="position:absolute;left:3163px;top:463px;" width="18" height="32" viewBox="0 0 18 32"><g fill="none" stroke="#777" stroke-width="1.8"><circle cx="8.5" cy="6.5" r="3.3"/><circle cx="8.5" cy="15.5" r="3.3"/><circle cx="8.5" cy="24.5" r="3.3"/></g></svg>
<div style="position:absolute;left:893px;top:525px;width:2205px;height:62px;border:1px solid #b8b8b8;border-radius:5px;box-sizing:border-box;background:#fff"></div>
<div class="t" style="left:908.5px;top:541px;font-size:26.3px;font-weight:400;color:#9e9e9e;">Filter is empty</div>
<svg style="position:absolute;left:3117px;top:543px;" width="30" height="25" viewBox="0 0 30 25"><path d="M2.5 21 L10 4 C10.5 3 11.5 2.5 12.5 2.5 L17.5 2.5 C19 2.5 19.5 3.5 19 4.5 L12 21 C11.5 22 10.5 22.5 9.5 22.5 L4 22.5 C2.8 22.5 2 22 2.5 21 Z" fill="#e8e4cc" stroke="#c8c2a0" stroke-width="1.3"/><path d="M6.5 11 L17 11" stroke="#c8c2a0" stroke-width="1.2"/><path d="M13.5 22 L26.5 22" stroke="#a8a48c" stroke-width="1.5"/></svg>
<svg style="position:absolute;left:3158px;top:541px;" width="28" height="28" viewBox="0 0 28 28"><path d="M4 8 L8 4 L14 10 L20 4 L24 8 L18 14 L24 20 L20 24 L14 18 L8 24 L4 20 L10 14 Z" fill="#6f6f6f" stroke="#6f6f6f" stroke-width="2.5" stroke-linejoin="round"/></svg>
<div style="position:absolute;left:883px;top:596px;width:2312px;height:57px;background:#efefef"></div>
<div style="position:absolute;left:883px;top:652px;width:2312px;height:1px;background:#e3e3e3"></div>
<div style="position:absolute;left:1013px;top:596px;width:1px;height:949px;background:#d9d9d9"></div>
<div style="position:absolute;left:1673px;top:596px;width:1px;height:949px;background:#d9d9d9"></div>
<div style="position:absolute;left:1955px;top:596px;width:1px;height:949px;background:#d9d9d9"></div>
<div style="position:absolute;left:2180px;top:596px;width:1px;height:949px;background:#d9d9d9"></div>
<div style="position:absolute;left:2461px;top:596px;width:1px;height:949px;background:#d9d9d9"></div>
<div style="position:absolute;left:2930px;top:596px;width:1px;height:949px;background:#d9d9d9"></div>
<div class="t" style="left:889px;top:610px;font-size:26.3px;font-weight:400;color:#272b31;">ID</div>
<div class="t" style="left:1020px;top:610px;font-size:26.3px;font-weight:400;color:#272b31;">Display name</div>
<div class="t" style="left:1679px;top:610px;font-size:26.3px;font-weight:400;color:#272b31;">Value</div>
<div class="t" style="left:1961px;top:610px;font-size:26.3px;font-weight:400;color:#272b31;">Timestamp</div>
<div class="t" style="left:2186px;top:610px;font-size:26.3px;font-weight:400;color:#272b31;">Threshold</div>
<div class="t" style="left:2467px;top:610px;font-size:26.3px;font-weight:400;color:#272b31;">Event</div>
<div class="t" style="left:2936px;top:610px;font-size:26.3px;font-weight:400;color:#272b31;">Message</div>
<svg style="position:absolute;left:989px;top:618px;" width="19" height="11" viewBox="0 0 19 11"><path d="M0.5 0.5 L17.5 0.5 L9 10 Z" fill="#c2c2c2"/></svg>
<div style="position:absolute;left:883px;top:697px;width:2312px;height:1px;background:#dedede"></div>
<div style="position:absolute;left:883px;top:742px;width:2312px;height:1px;background:#dedede"></div>
<div style="position:absolute;left:883px;top:787px;width:2312px;height:1px;background:#dedede"></div>
<div style="position:absolute;left:883px;top:832px;width:2312px;height:1px;background:#dedede"></div>
<div style="position:absolute;left:883px;top:877px;width:2312px;height:1px;background:#dedede"></div>
<div style="position:absolute;left:883px;top:922px;width:2312px;height:1px;background:#dedede"></div>
<div style="position:absolute;left:883px;top:967px;width:2312px;height:1px;background:#dedede"></div>
<div style="position:absolute;left:883px;top:1012px;width:2312px;height:1px;background:#dedede"></div>
<div style="position:absolute;left:883px;top:1057px;width:2312px;height:1px;background:#dedede"></div>
<div style="position:absolute;left:883px;top:1102px;width:2312px;height:1px;background:#dedede"></div>
<div style="position:absolute;left:883px;top:1147px;width:2312px;height:1px;background:#dedede"></div>
<div style="position:absolute;left:883px;top:1192px;width:2312px;height:1px;background:#dedede"></div>
<div style="position:absolute;left:883px;top:1237px;width:2312px;height:1px;background:#dedede"></div>
<div style="position:absolute;left:883px;top:1282px;width:2312px;height:1px;background:#dedede"></div>
<div style="position:absolute;left:883px;top:1327px;width:2312px;height:1px;background:#dedede"></div>
<div style="position:absolute;left:883px;top:1372px;width:2312px;height:1px;background:#dedede"></div>
<div style="position:absolute;left:883px;top:1417px;width:2312px;height:1px;background:#dedede"></div>
<div style="position:absolute;left:883px;top:1462px;width:2312px;height:1px;background:#dedede"></div>
<div style="position:absolute;left:883px;top:1507px;width:2312px;height:1px;background:#dedede"></div>
<svg style="position:absolute;left:893px;top:664px;" width="22" height="20" viewBox="0 0 22 20"><rect x="1" y="1" width="19.5" height="17.5" rx="1" fill="url(#grn)" stroke="#7ab850" stroke-width="0.6"/></svg>
<div class="t" style="left:924px;top:661px;font-size:24.3px;font-weight:400;color:#272b31;">26670</div>
<div class="t" style="left:1020px;top:661px;font-size:24.3px;font-weight:400;color:#272b31;">Cluster count</div>
<div class="t" style="left:1679px;top:661px;font-size:24.3px;font-weight:400;color:#272b31;">1</div>
<div class="t" style="left:1961px;top:661px;font-size:24.3px;font-weight:400;color:#272b31;width:214px;overflow:hidden">06.09.2024 17:07:41</div>
<svg style="position:absolute;left:2186px;top:661px;" width="30" height="30" viewBox="0 0 30 30"><circle cx="14.5" cy="15" r="13" fill="url(#okg)" stroke="#5a8a3a" stroke-width="1"/><path d="M8 15 L12.5 19.5 L21 10.5" fill="none" stroke="#fff" stroke-width="2.4"/></svg>
<div class="t" style="left:2222px;top:661px;font-size:24.3px;font-weight:400;color:#272b31;">OK</div>
<svg style="position:absolute;left:893px;top:709px;" width="22" height="20" viewBox="0 0 22 20"><rect x="1" y="1" width="19.5" height="17.5" rx="1" fill="url(#grn)" stroke="#7ab850" stroke-width="0.6"/></svg>
<div class="t" style="left:924px;top:706px;font-size:24.3px;font-weight:400;color:#272b31;">26666</div>
<div class="t" style="left:1020px;top:706px;font-size:24.3px;font-weight:400;color:#272b31;">Rack count</div>
<div class="t" style="left:1679px;top:706px;font-size:24.3px;font-weight:400;color:#272b31;">1</div>
<div class="t" style="left:1961px;top:706px;font-size:24.3px;font-weight:400;color:#272b31;width:214px;overflow:hidden">06.09.2024 17:07:41</div>
<svg style="position:absolute;left:2186px;top:706px;" width="30" height="30" viewBox="0 0 30 30"><circle cx="14.5" cy="15" r="13" fill="url(#okg)" stroke="#5a8a3a" stroke-width="1"/><path d="M8 15 L12.5 19.5 L21 10.5" fill="none" stroke="#fff" stroke-width="2.4"/></svg>
<div class="t" style="left:2222px;top:706px;font-size:24.3px;font-weight:400;color:#272b31;">OK</div>
<svg style="position:absolute;left:893px;top:754px;" width="22" height="20" viewBox="0 0 22 20"><rect x="1" y="1" width="19.5" height="17.5" rx="1" fill="url(#grn)" stroke="#7ab850" stroke-width="0.6"/></svg>
<div class="t" style="left:924px;top:751px;font-size:24.3px;font-weight:400;color:#272b31;">26662</div>
<div class="t" style="left:1020px;top:751px;font-size:24.3px;font-weight:400;color:#272b31;">Node count</div>
<div class="t" style="left:1679px;top:751px;font-size:24.3px;font-weight:400;color:#272b31;">112</div>
<div class="t" style="left:1961px;top:751px;font-size:24.3px;font-weight:400;color:#272b31;width:214px;overflow:hidden">06.09.2024 17:07:41</div>
<svg style="position:absolute;left:2186px;top:751px;" width="30" height="30" viewBox="0 0 30 30"><circle cx="14.5" cy="15" r="13" fill="url(#okg)" stroke="#5a8a3a" stroke-width="1"/><path d="M8 15 L12.5 19.5 L21 10.5" fill="none" stroke="#fff" stroke-width="2.4"/></svg>
<div class="t" style="left:2222px;top:751px;font-size:24.3px;font-weight:400;color:#272b31;">OK</div>
<div style="position:absolute;left:883px;top:1545px;width:2312px;height:28px;background:#f0f0f0"></div>
<div style="position:absolute;left:883px;top:1545px;width:29px;height:28px;border:1px solid #a8a8a8;box-sizing:border-box;background:linear-gradient(#fff,#e6e6e6 60%,#f4f4f4)"></div>
<svg style="position:absolute;left:893px;top:1551px;" width="10" height="15" viewBox="0 0 10 15"><path d="M9 0.5 L9 14.5 L0.5 7.5 Z" fill="#707070"/></svg>
<div style="position:absolute;left:911px;top:1545px;width:1749px;height:28px;border:1px solid #a8a8a8;box-sizing:border-box;background:linear-gradient(#ffffff,#e2e2e2 60%,#f2f2f2)"></div>
<svg style="position:absolute;left:1776px;top:1551px;" width="17" height="15" viewBox="0 0 17 15"><path d="M2 1 L2 14 M8 1 L8 14 M14 1 L14 14" stroke="#888" stroke-width="3"/></svg>
<div style="position:absolute;left:3167px;top:1545px;width:28px;height:28px;border:1px solid #a8a8a8;box-sizing:border-box;background:linear-gradient(#fff,#e6e6e6 60%,#f4f4f4)"></div>
<svg style="position:absolute;left:3176px;top:1551px;" width="10" height="15" viewBox="0 0 10 15"><path d="M1 0.5 L1 14.5 L9.5 7.5 Z" fill="#707070"/></svg>
</body></html>
